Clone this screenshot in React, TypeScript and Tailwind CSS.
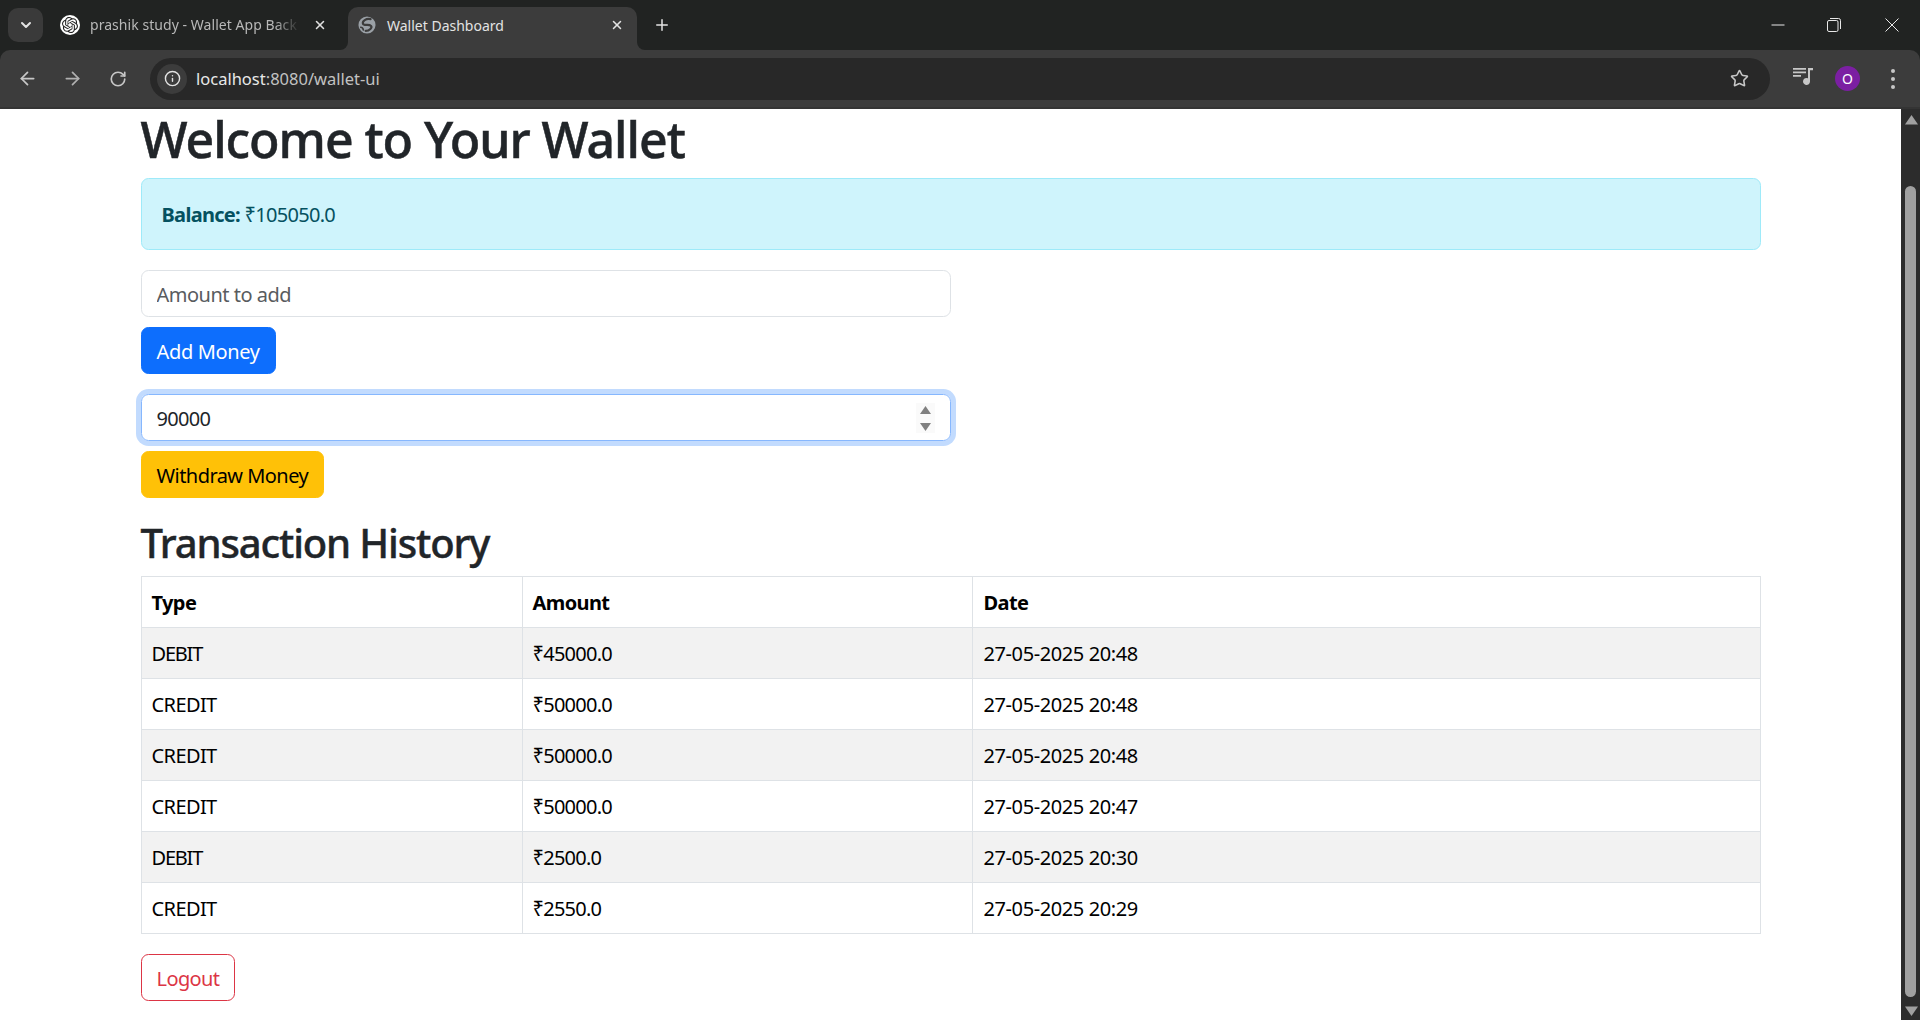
import { ArrowLeft, ArrowRight, ChevronDown, Info, Plus, RotateCw, Star, X } from "lucide-react";
import { SiOpenai } from "react-icons/si";

const rows = [
  ["DEBIT", "₹45000.0", "27-05-2025 20:48"],
  ["CREDIT", "₹50000.0", "27-05-2025 20:48"],
  ["CREDIT", "₹50000.0", "27-05-2025 20:48"],
  ["CREDIT", "₹50000.0", "27-05-2025 20:47"],
  ["DEBIT", "₹2500.0", "27-05-2025 20:30"],
  ["CREDIT", "₹2550.0", "27-05-2025 20:29"],
];

function Globe() {
  return (
    <svg viewBox="0 0 20 20" className="w-[18px] h-[18px] shrink-0">
      <circle cx="10" cy="10" r="9.500" fill="#9aa0a6" />
      <path d="M14 3.500C9 2.500 4.500 5.500 5.500 8.500C6.500 11.500 12 8.500 14.500 11C16 12.800 13 16.500 8.500 16.500" fill="none" stroke="#3c3c3c" strokeWidth="2.400" strokeLinecap="round" />
      <path d="M3 12.500c1.500 0 2.500 1 3 3" fill="none" stroke="#3c3c3c" strokeWidth="1.800" strokeLinecap="round" />
    </svg>
  );
}

function Chrome() {
  return (
    <div className="shrink-0 bg-[#212322] font-['Noto_Sans',sans-serif]">
      <div className="h-[50px] flex items-start relative text-[#c7c7c7]">
        <div className="mt-2 ml-2 w-[35px] h-[34px] rounded-[10px] bg-[#3a3a3a] flex items-center justify-center text-[#e3e3e3]">
          <ChevronDown size={16} strokeWidth={3} />
        </div>
        <div className="ml-[17px] w-[288px] h-[50px] flex items-center pb-[1px]">
          <div className="w-5 h-5 rounded-full bg-white flex items-center justify-center text-[#222] shrink-0">
            <SiOpenai size={16} />
          </div>
          <span className="ml-[10px] w-[210px] overflow-hidden whitespace-nowrap text-[14px] tracking-[0.05px] text-[#b8b8b8] [mask-image:linear-gradient(to_right,black_88%,transparent)]">prashik study - Wallet App Back</span>
          <X size={14} strokeWidth={2.600} className="ml-[13px] text-[#e0e0e0]" />
        </div>
        <div className="relative mt-[7px] w-[289px] h-[43px] bg-[#3c3c3c] rounded-t-[10px] flex items-center pl-[10px] pb-[7px] text-[#e3e3e3]">
          <div className="absolute -left-2 bottom-0 w-2 h-2 bg-[#3c3c3c]"><div className="w-2 h-2 bg-[#212322] rounded-br-[8px]" /></div>
          <div className="absolute -right-2 bottom-0 w-2 h-2 bg-[#3c3c3c]"><div className="w-2 h-2 bg-[#212322] rounded-bl-[8px]" /></div>
          <Globe />
          <span className="ml-[11px] text-[14px] whitespace-nowrap">Wallet Dashboard</span>
          <X size={14} strokeWidth={2.600} className="ml-auto mr-[13px]" />
        </div>
        <div className="ml-[16px] h-[50px] flex items-center text-[#e3e3e3]"><Plus size={18} strokeWidth={2} /></div>
        <div className="ml-auto flex text-[#e8e8e8]">
          <div className="w-[46px] h-[50px] flex items-center justify-center">
            <svg width="14" height="14" viewBox="0 0 14 14"><path d="M0.500 7h13" stroke="currentColor" /></svg>
          </div>
          <div className="w-[46px] h-[50px] ml-[10px] flex items-center justify-center">
            <svg width="14" height="14" viewBox="0 0 14 14" fill="none" stroke="currentColor"><rect x="0.500" y="2.500" width="10.500" height="11" rx="1.500" /><path d="M3 .5h8.500a2 2 0 0 1 2 2V11" /></svg>
          </div>
          <div className="w-[46px] h-[50px] ml-[12px] mr-[5px] flex items-center justify-center">
            <svg width="14" height="14" viewBox="0 0 14 14" fill="none" stroke="currentColor"><path d="M.5.5l13 13M13.500.5l-13 13" /></svg>
          </div>
        </div>
      </div>
      <div className="h-[59px] bg-[#3c3c3c] border-b-2 border-[#343434] rounded-t-[10px] flex items-center text-[#c7c7c7]">
        <ArrowLeft size={21} strokeWidth={2} className="ml-[17px]" />
        <ArrowRight size={21} strokeWidth={2} className="ml-[24px] text-[#b0b0b0]" />
        <RotateCw size={18} strokeWidth={2.200} className="ml-[26px]" />
        <div className="ml-[23px] w-[1620px] h-[42px] rounded-full bg-[#282828] flex items-center pl-[7px] pr-[21px]">
          <div className="w-[30px] h-[30px] rounded-full bg-[#3c3c3c] flex items-center justify-center text-[#e3e3e3]"><Info size={17} strokeWidth={2} /></div>
          <span className="ml-[9px] pt-[2px] text-[16.500px] text-[#e8e8e8]">localhost<span className="text-[#c2c2c2]">:8080/wallet-ui</span></span>
          <Star size={19} strokeWidth={2} className="ml-auto" />
        </div>
        <svg width="20" height="19" viewBox="0 0 20 19" className="ml-[23px] -mt-[2px] text-[#c7c7c7]" fill="currentColor">
          <path d="M0 0h13v1.800H0zM0 3.500h13v1.800H0zM0 7h8v1.800H0z" />
          <path d="M15 0h5v2.200h-3v11.300a3.500 3.500 0 1 1-2-3.200z" />
        </svg>
        <div className="ml-[22px] w-[25px] h-[25px] rounded-full bg-[#7b1fa2] text-white flex items-center justify-center text-[14px]">O</div>
        <div className="ml-[31px] flex flex-col gap-[4px]">
          <span className="w-[4px] h-[4px] rounded-full bg-[#c7c7c7]" />
          <span className="w-[4px] h-[4px] rounded-full bg-[#c7c7c7]" />
          <span className="w-[4px] h-[4px] rounded-full bg-[#c7c7c7]" />
        </div>
      </div>
    </div>
  );
}

function Scrollbar() {
  return (
    <div className="w-[19px] shrink-0 bg-[#2c2c2c] flex flex-col items-center">
      <svg width="13" height="10" viewBox="0 0 13 10" className="mt-[6px] ml-[1px]"><path d="M6.500 0L13 9.500H0z" fill="#a0a0a0" /></svg>
      <div className="mt-[61px] w-[11px] h-[811px] rounded-full bg-[#a0a0a0]" />
      <svg width="13" height="10" viewBox="0 0 13 10" className="mt-[9px] ml-[1px]"><path d="M6.500 10L13 .5H0z" fill="#a0a0a0" /></svg>
    </div>
  );
}

const btn = "block h-[47px] px-[15px] pt-[2px] rounded-[7.500px] text-[20px] leading-[30px] border";

function trackOf(c: string, j: number) {
  if (j === 1) return "pl-[10px] tracking-[-0.75px]";
  if (j === 2) return "pl-[11px] tracking-[-0.4px]";
  return c === "DEBIT" ? "pl-[10px] tracking-[-1.200px]" : "pl-[10px] tracking-[-0.600px]";
}

export default function App() {
  return (
    <div className="w-[1920px] h-[1020px] flex flex-col overflow-hidden bg-white">
      <Chrome />
      <div className="flex-1 flex min-h-0">
        <main className="flex-1 pl-[140.500px] pr-[140.500px] font-['Noto_Sans',sans-serif] text-[#212529] overflow-hidden">
          <h1 className="text-[50px] leading-[60px] font-medium [-webkit-text-stroke:0.5px_#212529] mb-[9px] tracking-[-1.050px]">Welcome to Your Wallet</h1>
          <div className="h-[72px] mb-5 px-5 pt-[2px] flex items-center rounded-[7.500px] border border-[#9eeaf9] bg-[#cff4fc] text-[#055160] text-[20px] leading-[30px]">
            <p className="tracking-[-0.7px]"><b className="font-bold">Balance:</b> ₹105050.0</p>
          </div>
          <input
            placeholder="Amount to add"
            readOnly
            className="block w-[810px] h-[47px] mb-[10px] px-[15px] pt-[2px] rounded-[7.500px] border border-[#dee2e6] text-[20px] tracking-[-0.5px] outline-none placeholder:text-[#595c5f]"
          />
          <button className={`${btn} mb-5 bg-[#0d6efd] border-[#0d6efd] text-white tracking-[-0.35px]`}>Add Money</button>
          <div className="relative w-[810px] mb-[10px]">
            <input
              value="90000"
              readOnly
              className="block w-full h-[47px] px-[15px] pt-[2px] rounded-[7.500px] border border-[#86b7fe] shadow-[0_0_0_5px_rgba(13,110,253,0.25)] text-[20px] text-[#212529] tracking-[-0.7px] outline-none"
            />
            <div className="absolute right-[16px] top-[9px] w-[19px] h-[30px] bg-[#fafafa] flex flex-col items-center justify-center gap-[9px]">
              <svg width="11" height="8" viewBox="0 0 11 8"><path d="M5.500 0L11 8H0z" fill="#808080" /></svg>
              <svg width="11" height="8" viewBox="0 0 11 8"><path d="M5.500 8L11 0H0z" fill="#808080" /></svg>
            </div>
          </div>
          <button className={`${btn} mb-5 bg-[#ffc107] border-[#ffc107] text-black tracking-[-0.55px]`}>Withdraw Money</button>
          <h2 className="text-[40px] leading-[48px] pt-[1px] -mb-[1px] font-medium [-webkit-text-stroke:0.4px_#212529] tracking-[-1.150px]">Transaction History</h2>
          <div className="h-[10px]" />
          <table className="w-full table-fixed border-collapse text-black text-[20px] leading-[30px] mb-5">
            <colgroup>
              <col className="w-[381px]" />
              <col className="w-[450px]" />
              <col />
            </colgroup>
            <thead>
              <tr>
                {["Type", "Amount", "Date"].map((h) => (
                  <th key={h} className={`border border-[#dee2e6] pr-[10px] pt-[11px] pb-[9px] text-left font-bold tracking-[-0.6px] ${h === "Date" ? "pl-[11px]" : "pl-[10px]"}`}>{h}</th>
                ))}
              </tr>
            </thead>
            <tbody>
              {rows.map((r, i) => (
                <tr key={i} className={i % 2 === 0 ? "bg-[#f2f2f2]" : "bg-white"}>
                  {r.map((c, j) => (
                    <td key={j} className={`border border-[#dee2e6] pr-[10px] pt-[11px] pb-[9px] ${trackOf(c, j)}`}>{c}</td>
                  ))}
                </tr>
              ))}
            </tbody>
          </table>
          <button className={`${btn} border-[#dc3545] text-[#dc3545] tracking-[-0.6px]`}>Logout</button>
        </main>
        <Scrollbar />
      </div>
    </div>
  );
}
